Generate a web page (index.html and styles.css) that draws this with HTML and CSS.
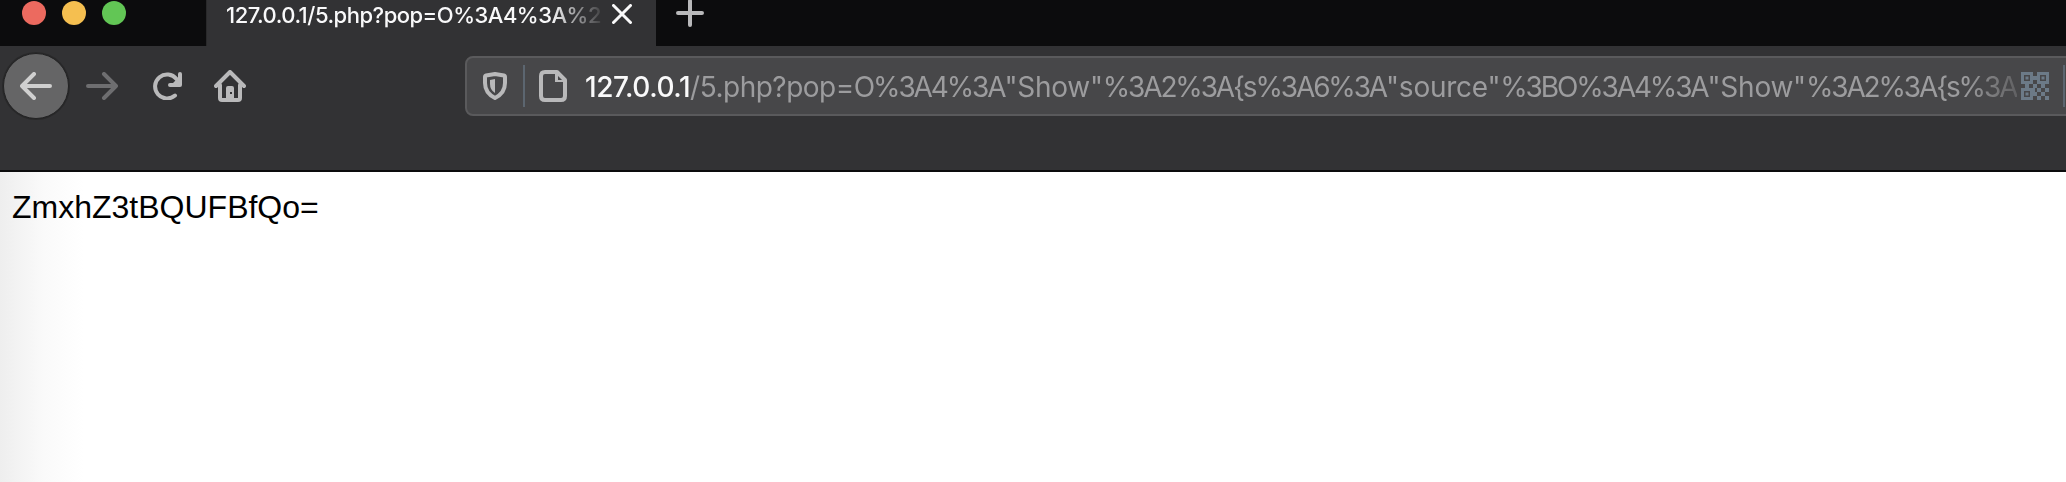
FILE: index.html
```html
<!DOCTYPE html>
<html lang="en">
<head>
<meta charset="utf-8">
<title>127.0.0.1/5.php</title>
<link rel="stylesheet" href="styles.css">
</head>
<body>
<header class="tabstrip">
  <div class="lights"><i class="light red"></i><i class="light yellow"></i><i class="light green"></i></div>
  <div class="tab">
    <div class="tab-title">127.0.0.1/5.php?pop=O%3A4%3A%2</div>
    <svg class="close" width="20" height="20" viewBox="0 0 20 20"><path d="M1.5 1.5l17 17M18.500 1.500l-17 17"/></svg>
  </div>
  <svg class="plus" width="28" height="28" viewBox="0 0 28 28"><path d="M2 14h24M14 2v24"/></svg>
</header>
<nav class="toolbar">
  <div class="back"><svg width="32" height="28" viewBox="0 0 32 28"><path d="M30 14H2M14 2L2 14l12 12"/></svg></div>
  <svg class="forward" width="32" height="28" viewBox="0 0 32 28"><path d="M2 14h28M18 2l12 12-12 12"/></svg>
  <svg class="reload" width="30" height="28" viewBox="0 0 30 28"><path d="M23 23.500A12 12 0 1 1 24.500 7"/><path d="M28 2v11H18"/><path class="fill" d="M28 4v9h-9z"/></svg>
  <svg class="home" width="32" height="32" viewBox="0 0 32 32"><path d="M2 16L16 2l14 14M6 15v13q0 2 2 2h16q2 0 2-2V15"/><path class="fill" d="M12 30V18q0-2 2-2h4q2 0 2 2v12zM16 22v2h2v-2z" fill-rule="evenodd"/></svg>
  <div class="urlbar">
    <svg class="shield" width="24" height="28" viewBox="0 0 24 28"><path d="M12 2L3 3.500Q2 3.700 2 5v6q0 10 10 15q10-5 10-15V5q0-1.300-1-1.500z"/><path class="fill" d="M12 7L7 8v4q0 6 5 9z"/></svg>
    <i class="divider"></i>
    <svg class="page-icon" width="28" height="32" viewBox="0 0 28 32"><path d="M6 2h12l8 8v16q0 4-4 4H6q-4 0-4-4V6q0-4 4-4z"/><path class="fill" d="M16 2h3l8 8v2H16zM19 5.500V10h4.500z" fill-rule="evenodd"/></svg>
    <div class="url"><span class="host">127.0.0.1</span><span class="path">/5.php?pop=</span><span class="query">O%3A4%3A<span class="word">"Show"</span>%3A2%3A{s%3A6%3A<span class="word">"source"</span>%3BO%3A4%3A<span class="word">"Show"</span>%3A2%3A{s%3A</span></div>
    <svg class="qr" width="28" height="28" viewBox="0 0 28 28"><path class="ring" d="M1.500 1.500h9v9h-9zM17.500 1.500h9v9h-9zM1.500 17.500h9v9h-9z"/><path d="M4.500 4.500h3v3h-3zM20.500 4.500h3v3h-3zM4.500 20.500h3v3h-3zM12 4h4v4h-4zM4 12h4v4H4zM12 12h4v4h-4zM20 12h4v4h-4zM16 16h4v4h-4zM24 16h4v4h-4zM12 16h2v4h-2zM20 20h4v4h-4zM12 20h4v4h-4zM16 24h4v4h-4zM24 24h4v4h-4z"/></svg>
    <i class="divider end"></i>
  </div>
</nav>
<main class="page">ZmxhZ3tBQUFBfQo=</main>
</body>
</html>
```
FILE: styles.css
```css
* { box-sizing: border-box; }
body { margin: 0; width: 2066px; height: 482px; overflow: hidden; display: flex; flex-direction: column; background: #fff; }
svg { flex: none; display: block; fill: none; stroke: #b9b9ba; stroke-width: 4; stroke-linecap: round; stroke-linejoin: round; }
svg .fill { fill: #b9b9ba; stroke: none; }
.tabstrip { flex: none; height: 46px; display: flex; align-items: flex-start; background: #0c0c0d; }
.lights { width: 206px; height: 26px; padding: 1px 0 0 22px; display: flex; gap: 16px; flex: none; }
.light { width: 24px; height: 24px; border-radius: 50%; }
.red { background: #ec6a5f; }
.yellow { background: #f5bf50; }
.green { background: #62c655; }
.tab { flex: none; width: 450px; height: 46px; padding-left: 19px; display: flex; background: #323234; border-left: 1px solid #29292a; }
.tab-title { width: 377px; height: 30px; line-height: 30px; overflow: hidden; white-space: nowrap; font-family: Inter, sans-serif; font-size: 22px; font-weight: 500; letter-spacing: -.5px; color: #f9f9fa; -webkit-mask-image: linear-gradient(90deg, #000 325px, transparent 380px); mask-image: linear-gradient(90deg, #000 325px, transparent 380px); }
.close { margin: 4px 0 0 9px; stroke: #f9f9fa; stroke-width: 3; }
.plus { margin: -1px 0 0 20px; }
.toolbar { flex: none; height: 126px; padding-top: 10px; display: flex; align-items: flex-start; background: #323234; border-bottom: 2px solid #0c0c0d; }
.back { flex: none; width: 66px; height: 66px; margin: -3px 0 0 3px; display: flex; align-items: center; justify-content: center; border-radius: 50%; background: #656566; border: 1px solid #222223; box-shadow: 0 0 0 1px #29292a; }
.back svg { stroke: #d0d0d0; }
.forward { margin: 16px 0 0 17px; stroke: #6e6e70; }
.reload { margin: 16px 0 0 34px; }
.home { margin: 14px 0 0 32px; }
.urlbar { flex: none; width: 1620px; height: 60px; margin-left: 219px; padding-left: 16px; display: flex; align-items: center; background: #474749; border: 2px solid #5a5a5c; border-radius: 8px; }
.divider { flex: none; width: 2px; height: 42px; margin: 0 14px 0 16px; background: #5c6670; }
.url { flex: none; width: 1432px; height: 42px; margin-left: 18px; line-height: 44px; overflow: hidden; white-space: nowrap; font-family: Inter, sans-serif; font-size: 28px; color: #9c9c9e; -webkit-mask-image: linear-gradient(90deg, #000 1380px, transparent 1455px); mask-image: linear-gradient(90deg, #000 1380px, transparent 1455px); }
.host { color: #f9f9fa; font-weight: 500; letter-spacing: -.45px; }
.path { letter-spacing: -.5px; }
.query { letter-spacing: -2.14px; }
.word { letter-spacing: -.25px; }
.qr { margin-left: 4px; fill: #6c7a87; stroke: none; }
.qr .ring { fill: none; stroke: #6c7a87; stroke-width: 3; stroke-linejoin: miter; }
.end { margin: 0 0 0 14px; }
.page { flex: 1; padding: 17px 12px; font: 32px/37px "Liberation Sans", Arial, sans-serif; color: #000; background: linear-gradient(90deg, #eee 0, #fafafa 44px, #fff 84px); }
```
